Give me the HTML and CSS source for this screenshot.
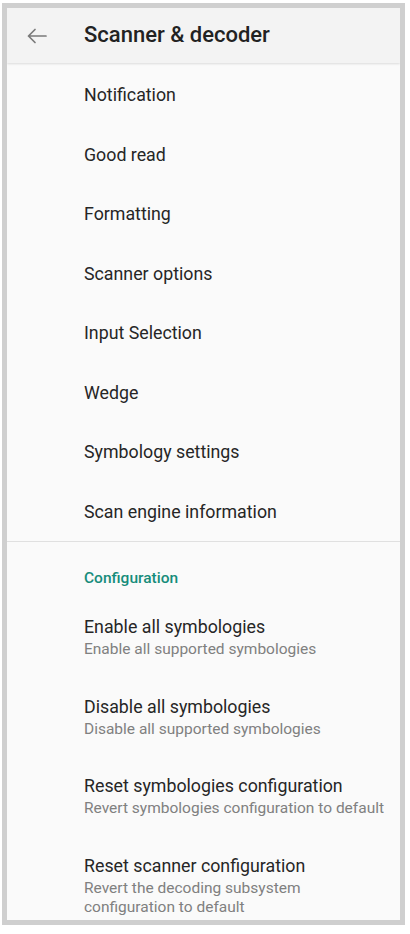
FILE: index.html
```html
<!DOCTYPE html>
<html>
<head>
    <title>Scanner &amp; decoder</title>
    <link rel="stylesheet" href="styles.css">
</head>
<body>
    <div class="frame">
        <div class="toolbar">
            <svg class="back" width="20" height="16" viewBox="0 0 20 16">
                <path d="M1.5 8H19M1.5 8L8 1.5M1.5 8L8 14.5" fill="none" stroke="#7a7a7a" stroke-width="1.7" stroke-linecap="round"/>
            </svg>
            <h1>Scanner &amp; decoder</h1>
        </div>

        <div class="list">
            <div class="item">Notification</div>
            <div class="item">Good read</div>
            <div class="item">Formatting</div>
            <div class="item">Scanner options</div>
            <div class="item">Input Selection</div>
            <div class="item">Wedge</div>
            <div class="item">Symbology settings</div>
            <div class="item">Scan engine information</div>
        </div>

        <div class="category">Configuration</div>

        <div class="pref">
            <div class="title">Enable all symbologies</div>
            <div class="summary">Enable all supported symbologies</div>
        </div>
        <div class="pref">
            <div class="title">Disable all symbologies</div>
            <div class="summary">Disable all supported symbologies</div>
        </div>
        <div class="pref">
            <div class="title">Reset symbologies configuration</div>
            <div class="summary">Revert symbologies configuration to default</div>
        </div>
        <div class="pref">
            <div class="title">Reset scanner configuration</div>
            <div class="summary">Revert the decoding subsystem configuration to default</div>
        </div>
    </div>
</body>
</html>
```

FILE: styles.css
```css
body {
    margin: 0;
    background: #ffffff;
    font-family: Roboto, "Noto Sans", sans-serif;
    color: #262626;
}
.frame {
    box-sizing: border-box;
    width: 403px;
    height: 922px;
    margin: 3px 0 0 2px;
    border: 5px solid #cfcfcf;
    background: #fafafa;
    overflow: hidden;
}
.toolbar {
    height: 55px;
    display: flex;
    align-items: center;
    background: #f3f3f3;
    box-shadow: 0 1px 2px rgba(0,0,0,0.12);
    position: relative;
}
.back {
    margin-left: 20px;
    margin-top: 1px;
}
h1 {
    margin: 0 0 3px 37px;
    font-size: 22px;
    font-weight: 500;
    color: #222;
}
.list {
    padding-top: 2px;
    border-bottom: 1px solid #e0e0e0;
}
.item {
    height: 59.5px;
    line-height: 59.5px;
    padding-left: 77px;
    font-size: 17.8px;
}
.category {
    padding: 26px 0 9px 77px;
    line-height: 20px;
    font-size: 15.5px;
    font-weight: 500;
    color: #168c7a;
}
.pref {
    padding: 19px 12px 17px 77px;
}
.title {
    font-size: 17.8px;
    line-height: 22px;
}
.summary {
    margin-top: 2px;
    font-size: 15.5px;
    line-height: 19.5px;
    color: #808080;
}
```
